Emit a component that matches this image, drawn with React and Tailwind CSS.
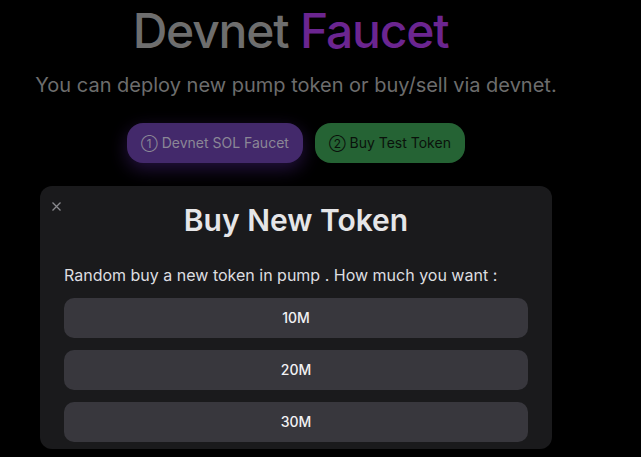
import React from "react";

export default function App() {
  return (
    <div className="min-h-[457px] w-full bg-black overflow-hidden" style={{ fontFamily: "Inter, 'Noto Sans', sans-serif" }}>
      <div className="w-[592px] flex flex-col items-center pt-[7px]">
        <h1 className="pr-[11px] text-[48px] leading-[48px] font-medium tracking-tight text-[#6e6e6e]">
          Devnet <span className="text-[#6b2590]">Faucet</span>
        </h1>
        <p className="mt-4 text-[20px] leading-[28px] text-[#6d6d6d]">
          You can deploy new pump token or buy/sell via devnet.
        </p>
        <div className="mt-6 flex gap-3">
          <button className="h-10 px-[14px] rounded-2xl bg-[#43296b] text-[#8b8796] text-sm shadow-[0_6px_18px_rgba(80,40,140,0.45)]">
            <span className="text-[12px]">①</span> Devnet SOL Faucet
          </button>
          <button className="h-10 px-[14px] rounded-2xl bg-[#256334] text-[#0a110b] text-sm">
            <span className="text-[12px]">②</span> Buy Test Token
          </button>
        </div>
        <div className="relative mt-[23px] w-[512px] rounded-xl bg-[#1a1a1c] px-6 pt-4 pb-[7px]">
          <button className="absolute left-[12px] top-[16px] text-[#8a8a8e] leading-none">
            <svg width="9" height="9" viewBox="0 0 9 9" fill="none" stroke="currentColor" strokeWidth="1.3">
              <path d="M0.5 0.5L8.5 8.5M8.5 0.5L0.5 8.5" />
            </svg>
          </button>
          <h2 className="text-center text-[30px] leading-[36px] font-semibold text-[#e6e6e8]">Buy New Token</h2>
          <p className="mt-[25px] text-base leading-6 text-[#dedee0]">
            Random buy a new token in pump . How much you want :
          </p>
          <div className="mt-[11px] flex flex-col gap-3">
            {["10M", "20M", "30M"].map((t) => (
              <button key={t} className="h-10 w-full rounded-[10px] bg-[#38373d] text-sm font-medium text-[#f2f2f4]">
                {t}
              </button>
            ))}
          </div>
        </div>
      </div>
    </div>
  );
}
